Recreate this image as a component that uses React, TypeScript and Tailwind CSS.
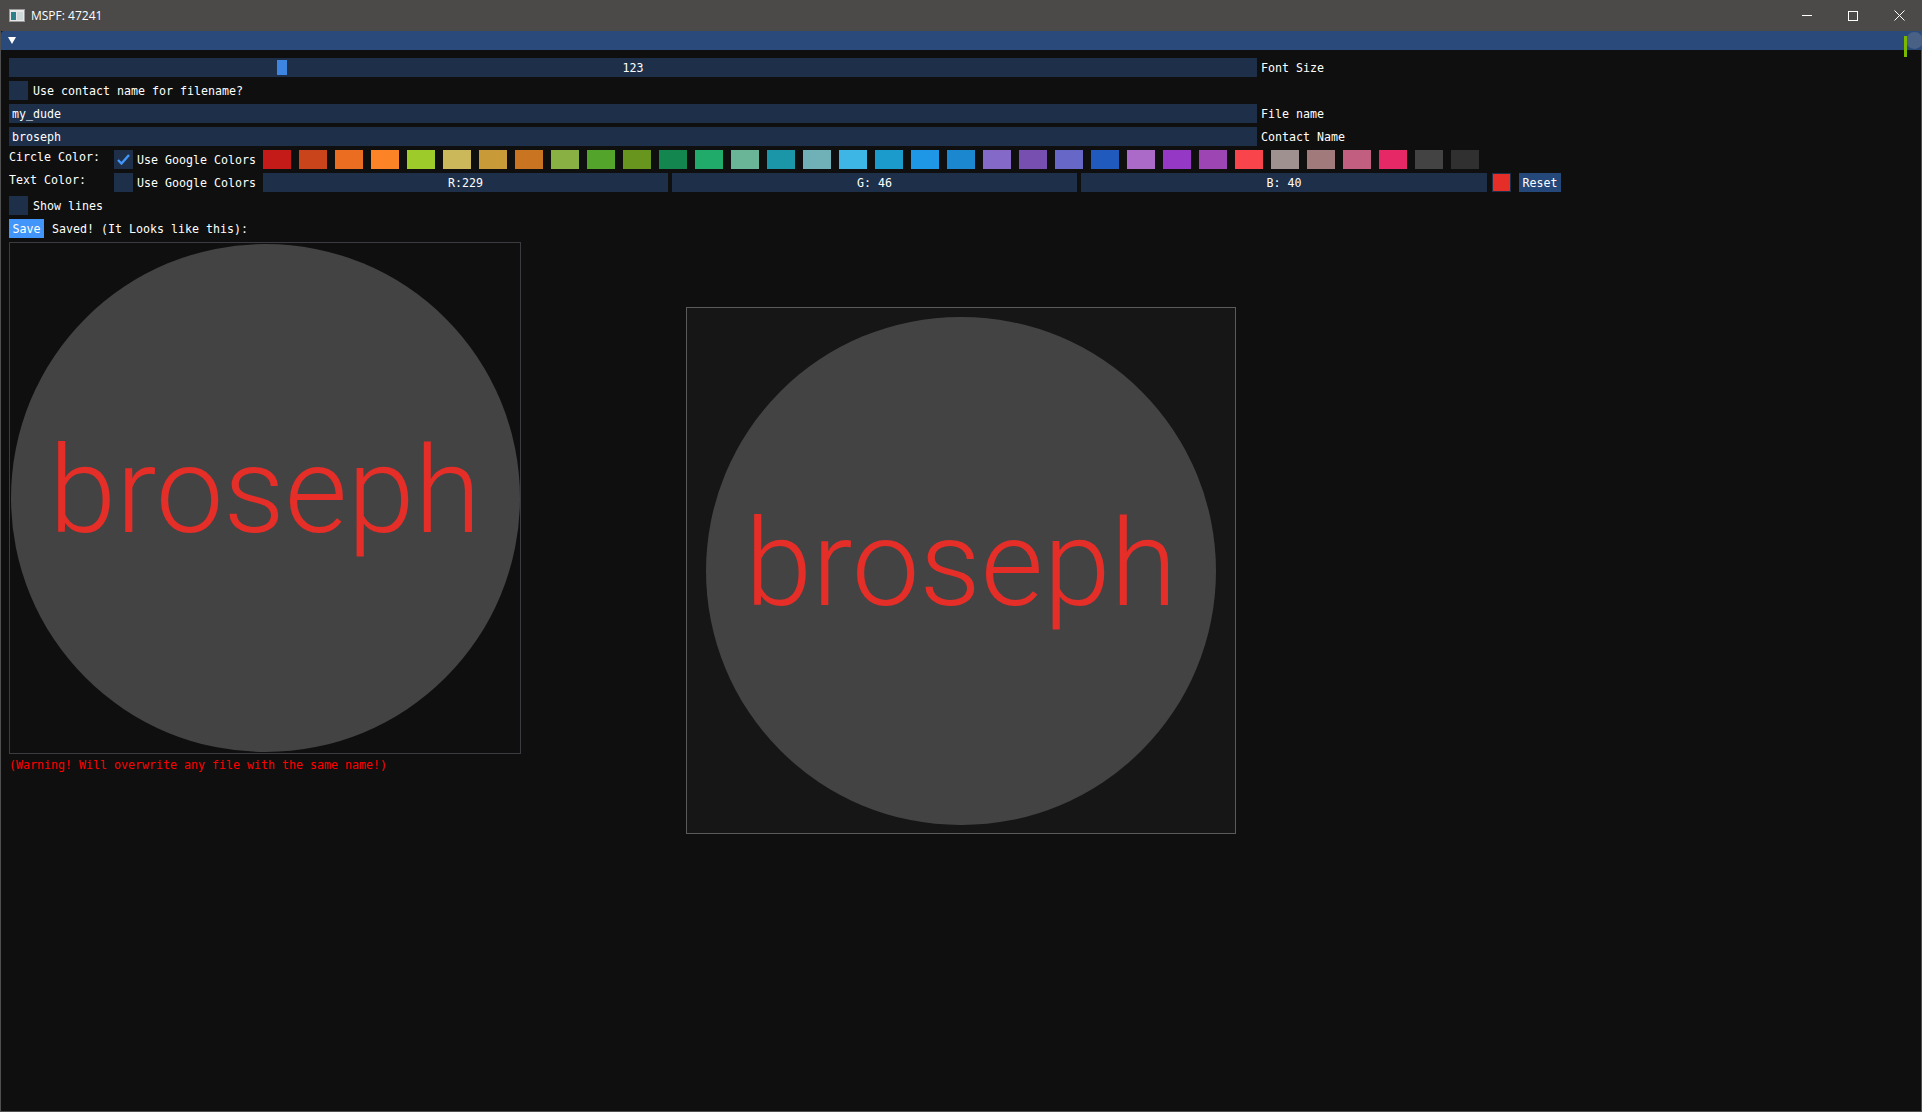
import React from "react";

const font = "font-['DejaVu_Sans_Mono',monospace] text-[11.63px] leading-[13px] relative top-[1px]";
const mono = `${font} text-white`;

const swatches = [
    "bg-[#c41a18]", "bg-[#c9431b]", "bg-[#ea6d22]", "bg-[#fc8427]", "bg-[#9dcb2a]", "bg-[#cbb85a]",
    "bg-[#c99a38]", "bg-[#c97421]", "bg-[#89b043]", "bg-[#52a52a]", "bg-[#68951e]", "bg-[#138650]",
    "bg-[#21ab6a]", "bg-[#6ab598]", "bg-[#1a96a8]", "bg-[#70b1b8]", "bg-[#3db5e5]", "bg-[#1b9bcc]",
    "bg-[#1f97e7]", "bg-[#1b87cf]", "bg-[#8569c9]", "bg-[#774fb0]", "bg-[#6767c8]", "bg-[#1f5abc]",
    "bg-[#ab6ac8]", "bg-[#9538c6]", "bg-[#9c45b3]", "bg-[#f9444c]", "bg-[#a09191]", "bg-[#a17b7c]",
    "bg-[#c25f80]", "bg-[#e62866]", "bg-[#434343]", "bg-[#303030]",
];

function Checkbox({ checked = false }: { checked?: boolean }) {
    return (
        <div className="w-[19px] h-[19px] bg-[#1d2f49] shrink-0 flex items-center justify-center">
            {checked && (
                <svg width="19" height="19" viewBox="0 0 19 19">
                    <polyline points="4,10 7.5,13.5 15,5" fill="none" stroke="#4296fa" strokeWidth="2.4" />
                </svg>
            )}
        </div>
    );
}

function Field({ text, label }: { text: string; label: string }) {
    return (
        <div className="flex items-center h-[19px]">
            <div className="w-[1248px] h-[19px] bg-[#1d2f49] pl-[3px] flex items-center">
                <span className={mono}>{text}</span>
            </div>
            <span className={`ml-[4px] ${mono}`}>{label}</span>
        </div>
    );
}

function Preview({ size }: { size: string }) {
    return <span className={size}>broseph</span>;
}

export default function App() {
    return (
        <div className="w-[1922px] h-[1112px] bg-[#0f0f0f] flex flex-col overflow-hidden">
            {/* OS title bar */}
            <div className="h-[31px] bg-[#4b4a48] flex items-center relative shrink-0">
                <svg className="ml-[9px]" width="16" height="13" viewBox="0 0 16 13">
                    <rect x="0.5" y="0.5" width="15" height="12" fill="#e8e8e8" stroke="#9a9a9a" />
                    <rect x="2" y="3" width="5" height="8" fill="#2f7f8a" />
                    <rect x="8" y="3" width="6" height="8" fill="#cfd8d8" />
                </svg>
                <span className="ml-[6px] font-['Open_Sans',sans-serif] text-[12px] text-white">MSPF: 47241</span>
                <div className="ml-auto flex items-center h-full">
                    <div className="w-[46px] h-full flex items-center justify-center">
                        <div className="w-[10px] h-px bg-white" />
                    </div>
                    <div className="w-[46px] h-full flex items-center justify-center">
                        <div className="w-[10px] h-[10px] border border-white" />
                    </div>
                    <div className="w-[46px] h-full flex items-center justify-center">
                        <svg width="11" height="11" viewBox="0 0 11 11">
                            <path d="M0.5 0.5 L10.5 10.5 M10.5 0.5 L0.5 10.5" stroke="white" strokeWidth="1" />
                        </svg>
                    </div>
                </div>
            </div>

            <div className="flex-1 flex flex-col border-x border-b border-[#4f4f4f] min-h-0">
                {/* ImGui window title */}
                <div className="h-[19px] bg-[#294a7a] relative shrink-0 rounded-tl-[3px]">
                    <svg className="absolute left-[7px] top-[6px]" width="8" height="7" viewBox="0 0 8 7">
                        <polygon points="0,0 8,0 4,7" fill="white" />
                    </svg>
                    <div className="absolute left-[1905px] top-[1px] w-[17px] h-[17px] rounded-full bg-[#4a6186]" />
                    <div className="absolute left-[1903px] top-[5px] w-[3px] h-[21px] bg-[#7ab800]" />
                </div>

                <div className="flex flex-col gap-[4px] pl-[8px] pt-[8px]">
                    {/* Font size slider */}
                    <div className="flex items-center h-[19px]">
                        <div className="w-[1248px] h-[19px] bg-[#1d2f49] relative flex items-center justify-center">
                            <div className="absolute left-[268px] top-[2px] w-[10px] h-[15px] bg-[#3d85e0]" />
                            <span className={mono}>123</span>
                        </div>
                        <span className={`ml-[4px] ${mono}`}>Font Size</span>
                    </div>

                    <div className="flex items-center h-[19px]">
                        <Checkbox />
                        <span className={`ml-[5px] ${mono}`}>Use contact name for filename?</span>
                    </div>

                    <Field text="my_dude" label="File name" />
                    <Field text="broseph" label="Contact Name" />

                    {/* Circle color */}
                    <div className="flex h-[19px]">
                        <div className="w-[254px] flex shrink-0">
                            <span className={`w-[105px] ${mono}`}>Circle Color:</span>
                            <Checkbox checked />
                            <span className={`ml-[4px] self-center ${mono}`}>Use Google Colors</span>
                        </div>
                        <div className="flex gap-[8px]">
                            {swatches.map((c, i) => (
                                <div key={i} className={`w-[28px] h-[19px] ${c}`} />
                            ))}
                        </div>
                    </div>

                    {/* Text color */}
                    <div className="flex h-[19px]">
                        <div className="w-[254px] flex shrink-0">
                            <span className={`w-[105px] ${mono}`}>Text Color:</span>
                            <Checkbox />
                            <span className={`ml-[4px] self-center ${mono}`}>Use Google Colors</span>
                        </div>
                        <div className="flex gap-[4px]">
                            <div className="w-[405px] h-[19px] bg-[#1d2f49] flex items-center justify-center">
                                <span className={mono}>R:229</span>
                            </div>
                            <div className="w-[405px] h-[19px] bg-[#1d2f49] flex items-center justify-center">
                                <span className={mono}>G: 46</span>
                            </div>
                            <div className="w-[406px] h-[19px] bg-[#1d2f49] flex items-center justify-center">
                                <span className={mono}>B: 40</span>
                            </div>
                        </div>
                        <div className="ml-[5px] w-[19px] h-[19px] bg-[#e52e28] border border-[#1d2f49]" />
                        <div className="ml-[8px] w-[42px] h-[19px] bg-[#25487a] flex items-center justify-center">
                            <span className={mono}>Reset</span>
                        </div>
                    </div>

                    <div className="flex items-center h-[19px]">
                        <Checkbox />
                        <span className={`ml-[5px] ${mono}`}>Show lines</span>
                    </div>

                    <div className="flex items-center h-[19px]">
                        <div className="w-[35px] h-[19px] bg-[#4296fa] flex items-center justify-center">
                            <span className={mono}>Save</span>
                        </div>
                        <span className={`ml-[8px] ${mono}`}>Saved! (It Looks like this):</span>
                    </div>

                    {/* Previews */}
                    <div className="flex items-start">
                        <div className="flex flex-col gap-[4px]">
                            <div className="w-[512px] h-[512px] border border-[#3b3b42] flex items-center justify-center">
                                <div className="w-[509px] h-[508px] rounded-full bg-[#434343] flex items-center justify-center">
                                    <Preview size="font-['Roboto',sans-serif] font-light text-[121px] leading-none text-[#e52e28] -translate-y-[7px]" />
                                </div>
                            </div>
                            <span className={`${font} text-[#ff0000]`}>(Warning! Will overwrite any file with the same name!)</span>
                        </div>

                        <div className="ml-[165px] mt-[65px] w-[550px] h-[527px] border border-[#5a5a5a] bg-[#161616] flex items-center justify-center">
                            <div className="w-[510px] h-[508px] rounded-full bg-[#434343] flex items-center justify-center">
                                <Preview size="font-['Roboto',sans-serif] font-light text-[121px] leading-none text-[#e52e28] -translate-y-[6px]" />
                            </div>
                        </div>
                    </div>
                </div>
            </div>
        </div>
    );
}
